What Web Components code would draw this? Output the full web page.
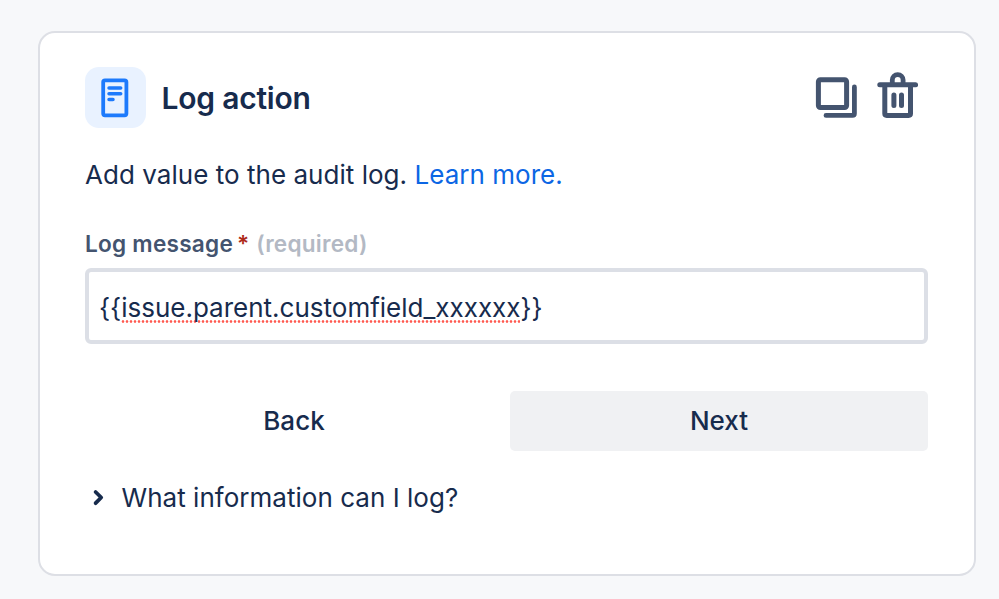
<!DOCTYPE html>
<html lang="en">
<head>
<meta charset="utf-8">
<title>Log action</title>
<style>
  html, body { margin: 0; height: 100%; }
  body { background: #f7f8fa; color: #172b4d; font-family: Inter, "Liberation Sans", sans-serif; overflow: hidden; }
</style>
</head>
<body>
<rule-card>
  <card-header slot="header" heading="Log action"></card-header>
  <card-description>Add value to the audit log. <a slot="link">Learn more.</a></card-description>
  <text-field label="Log message" hint="(required)" value="issue.parent.customfield_xxxxxx"></text-field>
  <button-row><action-button>Back</action-button><action-button filled>Next</action-button></button-row>
  <expand-toggle>What information can I log?</expand-toggle>
</rule-card>
<script>
const define = (name, markup, setup) => customElements.define(name, class extends HTMLElement {
  constructor() {
    super();
    this.attachShadow({ mode: 'open' }).innerHTML = markup;
  }
  connectedCallback() { if (setup) setup(this, this.shadowRoot); }
});

define('rule-card', `
  <style>
    :host { display: block; box-sizing: border-box; width: 938px; height: 545px; margin: 30.5px 0 0 37.5px;
      padding: 34.5px 45.5px 0; background: #fff; border: 2px solid #dddfe5; border-radius: 17px; }
  </style>
  <slot name="header"></slot><slot></slot>`);

define('card-header', `
  <style>
    :host { display: flex; align-items: center; height: 61px; }
    .tile { width: 61px; height: 61px; border-radius: 14px; background: #e9f2ff; flex: none; }
    h2 { margin: 0 0 0 15.5px; flex: 1; font-size: 30px; line-height: 40px; font-weight: 600; letter-spacing: -0.22px; }
    svg { display: block; }
    .copy { margin-right: 19px; }
    .trash { margin-right: 10px; }
  </style>
  <svg class="tile" viewBox="85 67 61 61" fill="none" stroke="#1d7afc" stroke-linecap="round">
    <rect x="103.2" y="80.3" width="23.2" height="35" rx="1.8" stroke-width="3.8"/>
    <path d="M109 88H120.7M109 93.7H120.7M109 99.5H113" stroke-width="3.5"/>
  </svg>
  <h2></h2>
  <svg class="copy" width="43" height="61" viewBox="815 67 43 61" fill="none" stroke="#44546f" stroke-linecap="round" stroke-linejoin="round">
    <rect x="818.4" y="79.7" width="28.2" height="27.8" rx="2" stroke-width="5"/>
    <path d="M854.4 87V113.5Q854.4 115.4 852.5 115.4H826" stroke-width="4.8"/>
  </svg>
  <svg class="trash" width="41" height="61" viewBox="877 67 41 61" fill="none" stroke="#44546f" stroke-linecap="round" stroke-linejoin="round">
    <path d="M892.3 83V80A5.4 5.4 0 0 1 903.1 80V83" stroke-width="4.8"/>
    <path d="M879.8 84.8H915.6" stroke-width="5"/>
    <path d="M884.8 86V113.5Q884.8 115.4 886.7 115.4H908.6Q910.5 115.4 910.5 113.5V86" stroke-width="5"/>
    <path d="M893.9 95V105.5M901.5 95V105.5" stroke-width="5"/>
  </svg>`,
  (el, root) => { root.querySelector('h2').textContent = el.getAttribute('heading'); });

define('card-description', `
  <style>
    :host { display: block; margin-top: 27px; font-size: 26px; line-height: 40px; white-space: nowrap; letter-spacing: 0.035px; }
    ::slotted(a) { color: #0c66e4; }
  </style>
  <slot></slot><slot name="link"></slot>`);

define('text-field', `
  <style>
    :host { display: block; margin-top: 34px; }
    label { display: flex; height: 30px; line-height: 30px; font-size: 22.6px; font-weight: 600; color: #44546f; letter-spacing: 0.24px; }
    .star { color: #ae2a19; margin-left: 4px; letter-spacing: 0; }
    .hint { color: #b3b9c4; margin-left: 7px; }
    .box { display: flex; align-items: center; box-sizing: border-box; height: 76px; margin-top: 9px; padding: 4px 0 0 10px;
      border: 4px solid #dcdfe6; border-radius: 6px; font-size: 26px; line-height: 40px; white-space: nowrap; }
    .word { height: 30px; line-height: 30px;
      background: radial-gradient(circle at 2px 1.5px, #ff5a50 0.9px, #ff5a5000 1.7px) 0 100% / 4px 3px repeat-x; }
  </style>
  <label><span class="name"></span><span class="star">*</span><span class="hint"></span></label>
  <div class="box"><span>{{</span><span class="word"></span><span>}}</span></div>`,
  (el, root) => {
    root.querySelector('.name').textContent = el.getAttribute('label');
    root.querySelector('.hint').textContent = el.getAttribute('hint');
    root.querySelector('.word').textContent = el.getAttribute('value');
  });

define('button-row', `
  <style>:host { display: grid; grid-template-columns: 1fr 1fr; gap: 7px; margin-top: 46.5px; }</style>
  <slot></slot>`);

define('action-button', `
  <style>
    :host { display: block; height: 60.5px; line-height: 60px; text-align: center; border-radius: 5px; font-size: 26px; font-weight: 500; }
    :host([filled]) { background: #f0f1f3; }
  </style>
  <slot></slot>`);

define('expand-toggle', `
  <style>
    :host { display: flex; align-items: center; height: 40px; margin-top: 27px; font-size: 26px; line-height: 40px; white-space: nowrap; letter-spacing: 0.03px; }
    svg { margin: 0 8.5px 0 3px; flex: none; }
  </style>
  <svg width="25" height="40" viewBox="88 478 25 40" fill="none" stroke="#172b4d" stroke-width="3.8" stroke-linecap="round" stroke-linejoin="round"><path d="M95.6 492L101.2 497.5L95.6 503.2"/></svg>
  <slot></slot>`);
</script>
</body>
</html>
